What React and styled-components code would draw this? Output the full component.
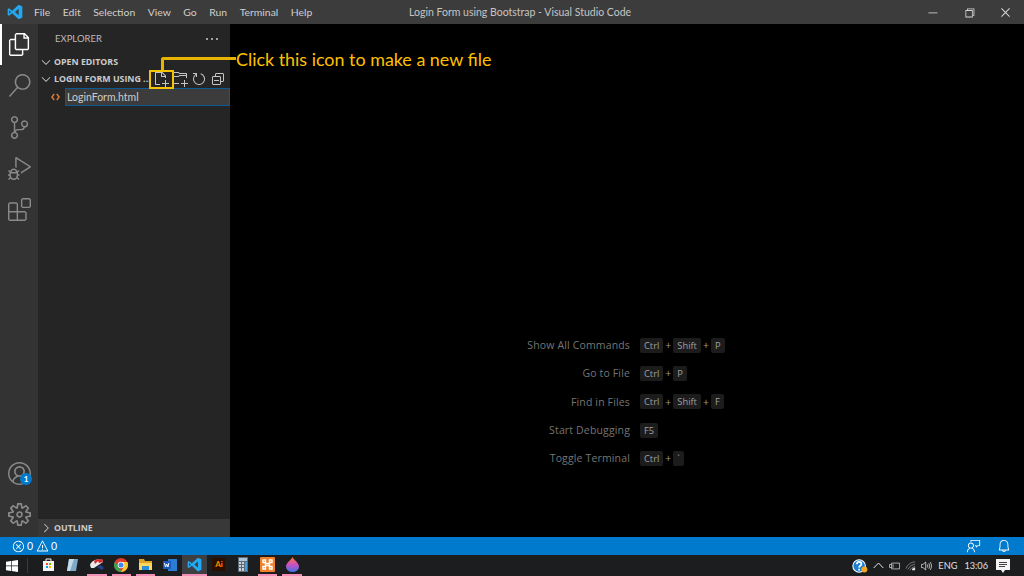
import React from 'react'
import styled, { createGlobalStyle } from 'styled-components'
import {
  VscFiles, VscSearch, VscSourceControl, VscDebugAlt, VscExtensions, VscAccount,
  VscSettingsGear, VscNewFile, VscNewFolder, VscRefresh, VscCollapseAll, VscEllipsis,
  VscChevronDown, VscChevronRight, VscError, VscWarning, VscFeedback, VscBell,
  VscChromeMinimize, VscChromeRestore, VscChromeClose,
} from 'react-icons/vsc'

const VsLogo = ({ size = 16, color = '#23a9f2' }) => (
  <svg width={size} height={size} viewBox="0 0 24 24">
    <path fill={color} d="M17.5 1 23 3.6v16.8L17.5 23 7.7 14l-4.6 3.6L1 16.4V7.6l2.1-1.2L7.7 10zM17.5 7l-5.6 5 5.6 5zM3.2 9.4v5.2L6 12z" />
  </svg>
)

const WinLogo = () => (
  <svg width="12" height="12" viewBox="0 0 12 12">
    <path fill="#fff" d="M0 1.7 5 1v4.6H0zM5.7.9 12 0v5.6H5.7zM0 6.3h5V11l-5-.7zM5.7 6.3H12V12l-6.3-.9z" />
  </svg>
)

const HtmlGlyph = () => (
  <svg width="9" height="8" viewBox="0 0 9 8">
    <path fill="none" stroke="#e37933" strokeWidth="1.4" d="M3.200 1 .9 4l2.300 3M5.800 1l2.300 3-2.300 3" />
  </svg>
)

const StoreIcon = () => (
  <svg width="13" height="13" viewBox="0 0 13 13">
    <path fill="#f4f4f4" d="M1 3h11v10H1z" />
    <path fill="none" stroke="#f4f4f4" d="M4 3V1h5v2" />
    <path fill="#f25022" d="M4 5h2v2H4z" />
    <path fill="#7fba00" d="M7 5h2v2H7z" />
    <path fill="#00a4ef" d="M4 8h2v2H4z" />
    <path fill="#ffb900" d="M7 8h2v2H7z" />
  </svg>
)

const GlassIcon = () => (
  <svg width="13" height="14" viewBox="0 0 13 14">
    <path fill="#7fa9c9" d="M3 1h9l-2 12H1z" />
    <path fill="#c4dcea" d="M3 1h5L4 13H1z" />
  </svg>
)

const BirdIcon = () => (
  <svg width="16" height="13" viewBox="0 0 16 13">
    <path fill="#e9e9e9" d="M1 7c1-4 6-6 12-6l1 3-9 6-3 0z" />
    <path fill="#d92b2b" d="M5 3c3-2 6-2 8-2l1 3-4 1-1-2-3 3z" />
    <path fill="#27408b" d="M8 9l4-2 3 3-2 2z" />
  </svg>
)

const ChromeIcon = () => (
  <svg width="14" height="14" viewBox="0 0 14 14">
    <circle cx="7" cy="7" r="7" fill="#e33b2e" />
    <path fill="#2fa84f" d="M7 14A7 7 0 0 1 1 3.5L4.5 9l3 5z" />
    <path fill="#fcc934" d="M14 7a7 7 0 0 1-7 7l3-5.5L7 4h6.5q.5 1.5.5 3z" />
    <circle cx="7" cy="7" r="3.3" fill="#fff" />
    <circle cx="7" cy="7" r="2.5" fill="#4285f4" />
  </svg>
)

const FolderIcon = () => (
  <svg width="15" height="13" viewBox="0 0 15 13">
    <path fill="#e0a526" d="M1 1h5l1 2h7v9H1z" />
    <path fill="#ffd75e" d="M1 5h13v7H1z" />
    <path fill="#2b8fd6" d="M4 8h7v4H4z" />
  </svg>
)

const WordIcon = () => (
  <svg width="15" height="14" viewBox="0 0 15 14">
    <path fill="#2b7cd3" d="M5 1h9v12H5z" />
    <path fill="#185abd" d="M0 3h8v8H0z" />
    <path fill="none" stroke="#fff" d="M1.5 5l1 4 1.2-3 1.2 3 1-4" />
  </svg>
)

const CalcIcon = () => (
  <svg width="10" height="15" viewBox="0 0 10 15">
    <path fill="#5d6a75" d="M0 0h10v15H0z" />
    <path fill="#a9c6dc" d="M1 1h8v3H1z" />
    <path fill="#c8d2da" d="M1 5h2v2H1zM4 5h2v2H4zM1 8h2v2H1zM4 8h2v2H4zM1 11h2v3H1zM4 11h2v3H4z" />
    <path fill="#3f9fe0" d="M7 5h2v9H7z" />
  </svg>
)

const XamppIcon = () => (
  <svg width="15" height="15" viewBox="0 0 15 15">
    <path fill="#f0802a" d="M0 1q0-1 1-1h13q1 0 1 1v13q0 1-1 1H1q-1 0-1-1z" />
    <path fill="none" stroke="#fff" strokeWidth="1.4" d="M3 3h2.500v3.500h4V3H12v2.500H9.500v4H12V12H9.500V8.500h-4V12H3V9.500h2.500v-4H3z" />
  </svg>
)

const DropIcon = () => (
  <svg width="13" height="15" viewBox="0 0 13 15">
    <defs>
      <linearGradient id="drop" x1="0" y1="0" x2="0" y2="1">
        <stop offset="0" stopColor="#f0792e" />
        <stop offset="0.5" stopColor="#d04fc0" />
        <stop offset="1" stopColor="#3a78e8" />
      </linearGradient>
    </defs>
    <path fill="url(#drop)" d="M6.5 0C8 3 13 6 13 9.5a6.5 5.5 0 0 1-13 0C0 6 5 3 6.5 0z" />
  </svg>
)

const HelpIcon = () => (
  <svg width="16" height="14" viewBox="0 0 18 16">
    <circle cx="8" cy="8" r="7.2" fill="#1a7fd0" stroke="#fff" strokeWidth="1.2" />
    <path fill="none" stroke="#fff" strokeWidth="2" d="M5.5 6q0-2.6 2.6-2.6t2.5 2.4q0 1.3-1.3 2t-1.2 2" />
    <path fill="#fff" d="M7 11h2v2H7z" />
    <circle cx="14" cy="12" r="3.4" fill="#f5a623" />
  </svg>
)

const TrayChevron = () => (
  <svg width="11" height="7" viewBox="0 0 11 7">
    <path fill="none" stroke="#e6e6e6" d="M.7 6 5.5 1l4.8 5" />
  </svg>
)

const BatteryIcon = () => (
  <svg width="11" height="8" viewBox="0 0 15 11">
    <path fill="none" stroke="#dcdcdc" d="M3.5 1.5h11v8h-11zM3.5 3.500h-3v4h3" />
    <path fill="#dcdcdc" d="M5 3h1v5H5z" />
  </svg>
)

const WifiIcon = () => (
  <svg width="11" height="10" viewBox="0 0 14 13">
    <path fill="none" stroke="#8d8d8d" d="M1 10Q4 2 13 1M3.500 11Q6 5 13 4M6 12q2-4 7-5" />
    <path fill="#dcdcdc" d="M9 10l4-2v4H9z" />
  </svg>
)

const SpeakerIcon = () => (
  <svg width="11" height="10" viewBox="0 0 14 12">
    <path fill="none" stroke="#dcdcdc" d="M.5 4h2L6 1v10L2.500 8h-2zM8 4q1.500 2 0 4M10 2.500q2.500 3.500 0 7M12 1q3.500 5 0 10" />
  </svg>
)

const NotifIcon = () => (
  <svg width="14" height="14" viewBox="0 0 14 14">
    <path fill="#f4f4f4" d="M0 0h14v11H9l-2 3-2-3H0z" />
    <path stroke="#444" d="M3 3.500h8M3 5.500h8M3 7.500h6" />
  </svg>
)

const menus = ['File', 'Edit', 'Selection', 'View', 'Go', 'Run', 'Terminal', 'Help']

const shortcuts = [
  { label: 'Show All Commands', keys: ['Ctrl', 'Shift', 'P'] },
  { label: 'Go to File', keys: ['Ctrl', 'P'] },
  { label: 'Find in Files', keys: ['Ctrl', 'Shift', 'F'] },
  { label: 'Start Debugging', keys: ['F5'] },
  { label: 'Toggle Terminal', keys: ['Ctrl', '`'] },
]

export default () => {
  const taskApps = [
    { id: 'store', icon: <StoreIcon /> },
    { id: 'glass', icon: <GlassIcon /> },
    { id: 'bird', icon: <BirdIcon />, open: true },
    { id: 'chrome', icon: <ChromeIcon />, open: true },
    { id: 'folder', icon: <FolderIcon />, open: true },
    { id: 'word', icon: <WordIcon /> },
    { id: 'code', icon: <VsLogo size={15} />, open: true, active: true },
    { id: 'ai', icon: <AiBadge>Ai</AiBadge> },
    { id: 'calc', icon: <CalcIcon /> },
    { id: 'xampp', icon: <XamppIcon />, open: true },
    { id: 'drop', icon: <DropIcon />, open: true },
  ]

  return (
    <Screen>
      <GlobalStyle />
      <TitleBar>
        <LogoSlot><VsLogo /></LogoSlot>
        <Menu>
          {menus.map(item => <MenuItem key={item}>{item}</MenuItem>)}
        </Menu>
        <WindowTitle>Login Form using Bootstrap - Visual Studio Code</WindowTitle>
        <WindowButtons>
          <WindowButton><VscChromeMinimize size={13} /></WindowButton>
          <WindowButton><VscChromeRestore size={13} /></WindowButton>
          <WindowButton><VscChromeClose size={13} /></WindowButton>
        </WindowButtons>
      </TitleBar>

      <Workbench>
        <ActivityBar>
          <ActivityItem $active><VscFiles size={23} /></ActivityItem>
          <ActivityItem><VscSearch size={23} /></ActivityItem>
          <ActivityItem><VscSourceControl size={23} /></ActivityItem>
          <ActivityItem><VscDebugAlt size={23} /></ActivityItem>
          <ActivityItem><VscExtensions size={23} /></ActivityItem>
          <ActivitySpacer />
          <ActivityItem>
            <VscAccount size={23} />
            <Badge>1</Badge>
          </ActivityItem>
          <ActivityItem><VscSettingsGear size={23} /></ActivityItem>
        </ActivityBar>

        <SideBar>
          <SideHeader>
            <SideTitle>EXPLORER</SideTitle>
            <VscEllipsis size={16} />
          </SideHeader>
          <SectionRow>
            <VscChevronDown size={14} />
            <SectionName>OPEN EDITORS</SectionName>
          </SectionRow>
          <SectionRow>
            <VscChevronDown size={14} />
            <SectionName>LOGIN FORM USING ...</SectionName>
            <SectionActions>
              <VscNewFile size={16} />
              <VscNewFolder size={16} />
              <VscRefresh size={16} />
              <VscCollapseAll size={16} />
            </SectionActions>
          </SectionRow>
          <FileRow>
            <FileGlyph><HtmlGlyph /></FileGlyph>
            <FileInput>LoginForm.html</FileInput>
          </FileRow>
          <SideSpacer />
          <OutlineRow>
            <VscChevronRight size={14} />
            <SectionName>OUTLINE</SectionName>
          </OutlineRow>
        </SideBar>

        <Editor>
          <Shortcuts>
            {shortcuts.map(item =>
              <Fragment key={item.label}>
                <ShortcutLabel>{item.label}</ShortcutLabel>
                <KeyRow>
                  {item.keys.map((key, i) =>
                    <Fragment key={key}>
                      {i > 0 && <Plus>+</Plus>}
                      <Key>{key}</Key>
                    </Fragment>
                  )}
                </KeyRow>
              </Fragment>
            )}
          </Shortcuts>
        </Editor>

        <Highlight />
        <Leader />
        <CalloutText>Click this icon to make a new file</CalloutText>
      </Workbench>

      <StatusBar>
        <StatusGroup>
          <VscError size={13} />
          <StatusCount>0</StatusCount>
          <VscWarning size={13} />
          <StatusCount>0</StatusCount>
        </StatusGroup>
        <StatusGroup $gap={16}>
          <VscFeedback size={14} />
          <VscBell size={14} />
        </StatusGroup>
      </StatusBar>

      <TaskBar>
        <StartSlot><WinLogo /></StartSlot>
        <TaskDivider />
        {taskApps.map(app =>
          <TaskCell key={app.id} $open={app.open} $active={app.active}>{app.icon}</TaskCell>
        )}
        <Tray>
          <HelpIcon />
          <TrayChevron />
          <BatteryIcon />
          <WifiIcon />
          <SpeakerIcon />
          <TrayText>ENG</TrayText>
          <TrayText>13:06</TrayText>
          <NotifIcon />
        </Tray>
      </TaskBar>
    </Screen>
  )
}

const Fragment = React.Fragment

const GlobalStyle = createGlobalStyle`
  html, body {
    margin: 0;
    padding: 0;
    background: #000;
  }
  body {
    font-family: Lato, "Liberation Sans", sans-serif;
  }
`

const Screen = styled.div`
  width: 1024px;
  height: 576px;
  display: flex;
  flex-direction: column;
  overflow: hidden;
`

const TitleBar = styled.div`
  height: 24px;
  flex: none;
  display: flex;
  align-items: center;
  position: relative;
  background: #3c3c3c;
  color: #cccccc;
  font-size: 10.4px;
`

const LogoSlot = styled.div`
  width: 25px;
  padding-left: 7px;
  display: flex;
  align-items: center;
`

const Menu = styled.div`
  display: flex;
  gap: 12.5px;
  padding-left: 2px;
`

const MenuItem = styled.span`
  color: #cfcfcf;
`

const WindowTitle = styled.div`
  position: absolute;
  left: 409px;
  top: 5px;
  color: #c4c4c4;
  font-size: 10.5px;
  line-height: 15px;
`

const WindowButtons = styled.div`
  display: flex;
  margin-left: auto;
`

const WindowButton = styled.div`
  width: 36.5px;
  height: 24px;
  display: flex;
  align-items: center;
  justify-content: center;
  color: #d6d6d6;
`

const Workbench = styled.div`
  height: 513px;
  flex: none;
  display: flex;
  position: relative;
`

const ActivityBar = styled.div`
  width: 38px;
  flex: none;
  display: flex;
  flex-direction: column;
  background: #333333;
  padding-bottom: 2px;
  box-sizing: border-box;
`

const ActivityItem = styled.div`
  height: 41.3px;
  flex: none;
  display: flex;
  align-items: center;
  justify-content: center;
  position: relative;
  box-sizing: border-box;
  color: ${p => (p.$active ? '#ffffff' : '#8a8a8a')};
  border-left: 2px solid ${p => (p.$active ? '#ffffff' : 'transparent')};
  padding-right: 2px;
`

const ActivitySpacer = styled.div`
  flex: 1;
`

const Badge = styled.div`
  position: absolute;
  right: 6px;
  top: 21px;
  width: 12px;
  height: 12px;
  border-radius: 50%;
  background: #007acc;
  color: #fff;
  font-size: 8px;
  font-weight: 700;
  line-height: 12px;
  text-align: center;
`

const SideBar = styled.div`
  width: 192px;
  flex: none;
  display: flex;
  flex-direction: column;
  background: #252526;
  color: #cccccc;
`

const SideHeader = styled.div`
  height: 29px;
  flex: none;
  display: flex;
  align-items: center;
  justify-content: space-between;
  padding: 0 10px 0 17px;
`

const SideTitle = styled.span`
  font-size: 9.5px;
  color: #bbbbbb;
`

const SectionRow = styled.div`
  height: 17.5px;
  flex: none;
  display: flex;
  align-items: center;
  padding-left: 1px;
  gap: 1px;

  & > svg {
    flex: none;
  }
`

const SectionName = styled.span`
  font-family: "Open Sans", sans-serif;
  font-size: 8.8px;
  font-weight: 700;
  color: #cccccc;
  white-space: nowrap;
`

const SectionActions = styled.div`
  display: flex;
  gap: 3px;
  margin-left: auto;
  padding-right: 4px;
  color: #c5c5c5;
`

const FileRow = styled.div`
  height: 18px;
  flex: none;
  display: flex;
  align-items: center;
`

const FileGlyph = styled.span`
  width: 27px;
  padding-left: 13px;
  box-sizing: border-box;
  display: flex;
  align-items: center;
`

const FileInput = styled.div`
  flex: 1;
  height: 18px;
  box-sizing: border-box;
  border: 1px solid #0b5a94;
  background: #3c3c3c;
  color: #cccccc;
  font-size: 10.5px;
  line-height: 16px;
  padding-left: 1px;
`

const SideSpacer = styled.div`
  flex: 1;
`

const OutlineRow = styled(SectionRow)`
  height: 18px;
  background: #383838;
`

const Editor = styled.div`
  flex: 1;
  background: #000;
  font-family: "Open Sans", sans-serif;
`

const Shortcuts = styled.div`
  display: grid;
  grid-template-columns: 400px auto;
  column-gap: 10px;
  grid-auto-rows: 28.3px;
  align-items: center;
  margin-top: 307px;
`

const ShortcutLabel = styled.div`
  text-align: right;
  color: #757575;
  font-size: 10.5px;
  letter-spacing: 0.15px;
`

const KeyRow = styled.div`
  display: flex;
  align-items: center;
`

const Key = styled.span`
  height: 15px;
  padding: 0 4px;
  background: #1c1c1c;
  border-radius: 2px;
  color: #a0a0a0;
  font-size: 9.3px;
  line-height: 15px;
`

const Plus = styled.span`
  width: 10px;
  text-align: center;
  color: #9a9a9a;
  font-size: 10.5px;
`

const Highlight = styled.div`
  position: absolute;
  left: 149px;
  top: 46px;
  width: 25px;
  height: 19px;
  box-sizing: border-box;
  border: 2px solid #f5c400;
`

const Leader = styled.div`
  position: absolute;
  left: 161px;
  top: 33px;
  width: 75px;
  height: 13px;
  box-sizing: border-box;
  border-left: 3px solid #e8b400;
  border-top: 3px solid #e8b400;
  border-top-left-radius: 3px;
`

const CalloutText = styled.div`
  position: absolute;
  left: 236px;
  top: 23px;
  color: #ffc000;
  font-size: 17.9px;
  line-height: 24px;
  white-space: nowrap;
`

const StatusBar = styled.div`
  height: 18px;
  flex: none;
  display: flex;
  align-items: center;
  justify-content: space-between;
  padding: 0 13px 0 12px;
  background: #007acc;
  color: #fff;
  font-size: 10.5px;
`

const StatusGroup = styled.div`
  display: flex;
  align-items: center;
  gap: ${p => p.$gap || 2}px;
`

const StatusCount = styled.span`
  margin-right: 1px;
`

const TaskBar = styled.div`
  height: 21px;
  flex: none;
  display: flex;
  align-items: stretch;
  background: #1b1d1f;
`

const StartSlot = styled.div`
  width: 23px;
  display: flex;
  align-items: center;
  justify-content: center;
`

const TaskDivider = styled.div`
  width: 1px;
  margin: 3px 8px 3px 4px;
  background: #3a3a3a;
`

const TaskCell = styled.div`
  width: 24.4px;
  display: flex;
  align-items: center;
  justify-content: center;
  position: relative;
  box-sizing: border-box;
  padding-bottom: 2px;
  background: ${p => (p.$active ? '#3d3f42' : 'transparent')};

  &::after {
    content: '';
    display: ${p => (p.$open ? 'block' : 'none')};
    position: absolute;
    left: ${p => (p.$active ? 0 : 2.5)}px;
    right: ${p => (p.$active ? 0 : 2.5)}px;
    bottom: 0;
    height: 2px;
    background: #f48fb8;
  }
`

const AiBadge = styled.span`
  width: 13px;
  height: 13px;
  background: #2a0f00;
  color: #ff8a00;
  font-size: 8px;
  font-weight: 700;
  line-height: 13px;
  text-align: center;
`

const Tray = styled.div`
  display: flex;
  align-items: center;
  gap: 5px;
  margin-left: auto;
  padding-right: 14px;
`

const TrayText = styled.span`
  color: #e0e0e0;
  font-size: 9.2px;
  margin: 0 1px;

  & + svg {
    margin-left: 2px;
  }
`
